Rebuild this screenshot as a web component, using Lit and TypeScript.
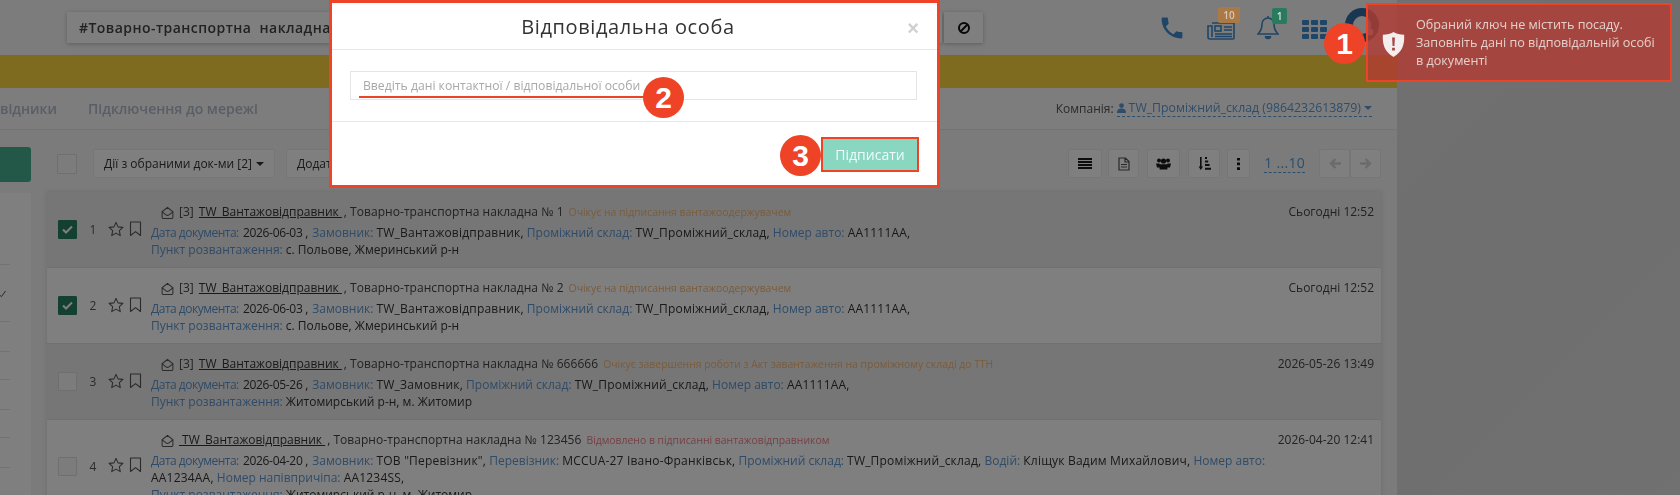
import { LitElement, html, css, svg } from "lit";
import { customElement } from "lit/decorators.js";

type Meta = [string, string];
interface Row {
  n: number; checked: boolean; prefix: string; doc: string; status: string; statusKind: string;
  date: string; meta: Meta[]; point: string; striped: boolean;
}
const rows: Row[] = [
  { n: 1, checked: true, striped: true, prefix: "[3]", doc: "Товарно-транспортна накладна № 1", status: "Очікує на підписання вантажоодержувачем", statusKind: "wait", date: "Сьогодні 12:52",
    meta: [["Дата документа:", "2026-06-03 ,"], ["Замовник:", "TW_Вантажовідправник,"], ["Проміжний склад:", "TW_Проміжний_склад,"], ["Номер авто:", "АА1111АА,"]], point: "с. Польове, Жмеринський р-н" },
  { n: 2, checked: true, striped: false, prefix: "[3]", doc: "Товарно-транспортна накладна № 2", status: "Очікує на підписання вантажоодержувачем", statusKind: "wait", date: "Сьогодні 12:52",
    meta: [["Дата документа:", "2026-06-03 ,"], ["Замовник:", "TW_Вантажовідправник,"], ["Проміжний склад:", "TW_Проміжний_склад,"], ["Номер авто:", "АА1111АА,"]], point: "с. Польове, Жмеринський р-н" },
  { n: 3, checked: false, striped: true, prefix: "[3]", doc: "Товарно-транспортна накладна № 666666", status: "Очікує завершення роботи з Акт завантаження на проміжному складі до ТТН", statusKind: "wait", date: "2026-05-26 13:49",
    meta: [["Дата документа:", "2026-05-26 ,"], ["Замовник:", "TW_Замовник,"], ["Проміжний склад:", "TW_Проміжний_склад,"], ["Номер авто:", "АА1111АА,"]], point: "Житомирський р-н, м. Житомир" },
  { n: 4, checked: false, striped: false, prefix: "", doc: "Товарно-транспортна накладна № 123456", status: "Відмовлено в підписанні вантажовідправником", statusKind: "rej", date: "2026-04-20 12:41",
    meta: [["Дата документа:", "2026-04-20 ,"], ["Замовник:", 'ТОВ "Перевізник",'], ["Перевізник:", "МССUA-27 Івано-Франківськ,"], ["Проміжний склад:", "TW_Проміжний_склад,"], ["Водій:", "Кліщук Вадим Михайлович,"], ["Номер авто:", "АА1234АА,"], ["Номер напівпричіпа:", "АА1234SS,"]], point: "Житомирський р-н, м. Житомир" },
];

const envelope = svg`<path d="M1.2 6.2 7 1.4l5.8 4.8v6.2a1 1 0 0 1-1 1H2.2a1 1 0 0 1-1-1z M1.6 6.6 5.4 9.6a2.6 2.6 0 0 0 3.2 0l3.8-3" fill="none" stroke="currentColor" stroke-width="1.1"/>`;
const star = svg`<path d="M7.5 1.3 9.4 5.5l4.6.5-3.4 3.1.9 4.6-4-2.3-4 2.3.9-4.6L1 6l4.6-.5z" fill="none" stroke="currentColor" stroke-width="1" stroke-linejoin="round"/>`;
const bookmark = svg`<path d="M1 1h10v13.5L6 10.6 1 14.5z" fill="none" stroke="currentColor" stroke-width="1.1" stroke-linejoin="round"/>`;

@customElement("app-root")
export class AppRoot extends LitElement {
  static styles = css`
    :host { display: block; position: relative; width: 1680px; height: 495px; overflow: hidden;
      font-family: "Open Sans", "Noto Sans", sans-serif; font-size: 12px; color: #3c3c3c; }
    svg { display: block; flex: none; }
    .page { display: flex; width: 1680px; height: 495px; overflow: hidden; filter: blur(0.6px); }
    .main { flex: none; width: 1397px; background: #f6f6f6; }
    .texture { flex: 1; background: linear-gradient(135deg, #dfe1df, #dcdedc 50%, #e0e2e0); }

    .top { height: 55px; display: flex; align-items: center; padding-left: 67px; background: #f8f8f8; padding-right: 18px; box-sizing: border-box; }
    .search { width: 875px; height: 31px; box-sizing: border-box; background: #fff; box-shadow: 0 1px 4px rgba(0,0,0,.25);
      display: flex; align-items: center; padding-left: 12px; font-size: 14px; font-weight: 600; letter-spacing: .45px; color: #444; white-space: pre; }
    .clear { margin-left: 2px; width: 39px; height: 31px; background: #fff; box-shadow: 0 1px 4px rgba(0,0,0,.25); display: flex; align-items: center; justify-content: center; color: #111; }
    .icons { margin-left: auto; display: flex; align-items: center; color: #3e8ccc; }
    .ic.news { margin-left: 24px; margin-top: 4px; }
    .ic.bell { margin-left: 22px; }
    .ic.grid { margin-left: 23px; margin-top: 3px; }
    .ic.ava { margin-left: 18px; margin-top: -6px; color: #2f6fa6; }

    .badge { position: absolute; height: 16px; box-sizing: border-box; border-radius: 2px; font-size: 10px; font-weight: 600; line-height: 16px; text-align: center; filter: blur(0.5px); }
    .b10 { left: 1218px; top: 7px; width: 22px; background: #a97a48; color: #d9c6b0; }
    .b1 { left: 1272px; top: 8px; width: 15px; background: #2a7a5e; color: #cfe0d8; }

    .yellow { height: 33px; background: #fdd63e; }

    .nav { height: 42px; box-sizing: border-box; display: flex; align-items: center; border-bottom: 1px solid #e6e6e6; padding-right: 25px; background: #fbfbfb; }
    .tab { font-size: 14px; font-weight: 600; color: #b0bccb; white-space: nowrap; }
    .tab.cut { width: 88px; flex: none; }
    .company { margin-left: auto; display: flex; align-items: center; gap: 3px; color: #555; white-space: nowrap; }
    .company .link { display: inline-flex; align-items: center; gap: 3px; color: #5b9bd5; border-bottom: 1px dashed #5b9bd5; line-height: 16px; font-size: 12.3px; }
    .caret { width: 0; height: 0; border-left: 4px solid transparent; border-right: 4px solid transparent; border-top: 4px solid currentColor; display: inline-block; }

    .content { display: flex; }
    .left { flex: none; width: 31px; padding-top: 17px; }
    .green { height: 35px; background: #47b090; border-radius: 0 3px 3px 0; }
    .panel { margin-top: 11px; height: 320px; background: #fff; display: flex; flex-direction: column; }
    .tick { flex: none; width: 10px; box-sizing: border-box; border-bottom: 1px solid #e4e4e4; }
    .tick.mark-tick { display: flex; align-items: center; color: #555; }
    .right { flex: none; width: 1334px; margin-left: 16px; padding-top: 19px; }

    .tools { display: flex; align-items: center; height: 29px; padding-left: 10px; margin-bottom: 14px; }
    .box { flex: none; width: 20px; height: 20px; box-sizing: border-box; border: 1px solid #dedede; background: #f9f9f9; border-radius: 1px; display: flex; align-items: center; justify-content: center; color: #fff; }
    .box.on { background: #268060; border-color: #268060; }
    .btn { height: 29px; box-sizing: border-box; border: 1px solid #ececec; background: #fff; border-radius: 2px; display: flex; align-items: center; justify-content: center; color: #333; white-space: nowrap; }
    .btn.act { margin-left: 16px; width: 182px; gap: 4px; }
    .btn.add { margin-left: 11px; width: 180px; justify-content: flex-start; padding-left: 10px; gap: 4px; }
    .tright { margin-left: auto; display: flex; align-items: center; }
    .btn.i { color: #1a1a1a; }
    .w34 { width: 34px; }
    .w31 { width: 31px; margin-left: 6px; }
    .w33 { width: 33px; margin-left: 8px; }
    .w32 { width: 32px; margin-left: 8px; }
    .w23 { width: 23px; margin-left: 7px; }
    .pager { color: #5b9bd5; border-bottom: 1px dashed #5b9bd5; font-size: 14px; line-height: 18px; margin: 0 14px; letter-spacing: .3px; }
    .arrows { display: flex; }
    .arrows .btn { width: 31px; color: #d6d6d6; }

    .list { background: #fff; box-shadow: 0 0 5px rgba(0,0,0,.12); }
    .row { display: flex; background: #fff; border-bottom: 1px solid #e2e2e2; }
    .row.st { background: #ececec; }
    .row .lead { flex: none; align-self: center; display: flex; align-items: center; padding-left: 11px; color: #555; }
    .row .box { width: 19px; height: 19px; }
    .num { width: 8px; margin-left: 12px; text-align: center; }
    .star { margin-left: 11px; margin-top: -2px; }
    .mark { margin-left: 5px; margin-top: -2px; }
    .body { flex: none; width: 1120px; margin-left: 9px; padding: 11px 0 9px; line-height: 17px; white-space: normal; color: #333; }
    .title { display: flex; align-items: center; padding-left: 10px; color: #444; margin-bottom: 3px; white-space: pre; line-height: 18px; }
    .title svg { color: #555; margin-right: 5px; }
    .prefix { margin-right: 2px; }
    .sender { text-decoration: underline; color: #333; margin-right: 2px; }
    .doc { letter-spacing: .05px; }
    .stat { font-size: 10.4px; margin-left: 5px; }
    .stat.wait { color: #f5b877; }
    .stat.rej { color: #ef7f8c; }
    .lb { color: #5f96d0; }
    .lb.first { letter-spacing: -.5px; margin-right: 1px; }
    .val { letter-spacing: .2px; }
    .val.first { letter-spacing: -.3px; margin-right: 1px; }
    .date { flex: 1; text-align: right; padding: 11px 7px 0 0; line-height: 18px; color: #444; white-space: nowrap; }

    .veil { position: absolute; inset: 0; background: rgba(0,0,0,.5); }

    .modal { position: absolute; left: 329px; top: 0; width: 611px; height: 188px; box-sizing: border-box; background: #fff; border: 3px solid #ee4326; filter: blur(0.45px); }
    .m-head { height: 47px; box-sizing: border-box; border-bottom: 1px solid #e8e8e8; display: flex; align-items: center; justify-content: center; font-size: 20px; color: #333; position: relative; letter-spacing: .6px; padding-right: 13px; }
    .x { position: absolute; right: 18px; top: 15px; font-size: 20px; line-height: 20px; font-weight: 700; color: #cfcfcf; font-family: "Liberation Sans", sans-serif; letter-spacing: 0; }
    .m-body { padding: 21px 20px 21px 18px; }
    .input { height: 29px; box-sizing: border-box; border: 1px solid #e5e5e5; padding-left: 12px; display: flex; align-items: center; color: #a8a8a8; font-size: 12.2px; }
    .m-foot { border-top: 1px solid #e8e8e8; display: flex; justify-content: flex-end; padding: 15px 18px 0 0; }
    .sign { width: 98px; height: 35px; box-sizing: border-box; border: 2px solid #ee4326; background: #8ad7c1; color: #f2fbf8; font-size: 14px; display: flex; align-items: center; justify-content: center; }

    .toast { position: absolute; left: 1366px; top: 3px; width: 306px; height: 79px; box-sizing: border-box; border: 2px solid #ee4326; background: rgba(177,60,51,.8); display: flex; align-items: center; color: #e6d0cc; line-height: 18px; font-size: 12.6px; filter: blur(0.4px); }
    .toast svg { margin-left: 14px; margin-right: 11px; margin-top: 3px; }

    .line { position: absolute; left: 359px; top: 96px; width: 286px; height: 2px; background: #ee4326; }
    .pin { position: absolute; width: 41px; height: 41px; border-radius: 50%; background: #ee4326; color: #fff; font-family: "Liberation Sans", sans-serif; font-weight: 700; font-size: 30px; display: flex; align-items: center; justify-content: center; }
    .p1 { left: 1324px; top: 23px; }
    .p2 { left: 643px; top: 77px; }
    .p3 { left: 780px; top: 135px; }
  `;

  private row(r: Row) {
    const check = r.checked
      ? html`<svg width="11" height="9" viewBox="0 0 11 9"><path d="M1 4.500 4 7.500 10 1.500" fill="none" stroke="#fff" stroke-width="2"/></svg>`
      : "";
    return html`<div class="row ${r.striped ? "st" : ""}">
      <div class="lead">
        <div class="box ${r.checked ? "on" : ""}">${check}</div>
        <div class="num">${r.n}</div>
        <svg class="star" width="16" height="16" viewBox="0 0 15 15">${star}</svg>
        <svg class="mark" width="13" height="16" viewBox="0 0 12 16">${bookmark}</svg>
      </div>
      <div class="body">
        <div class="title"><svg width="13" height="13" viewBox="0 0 14 14">${envelope}</svg>${r.prefix
          ? html`<span class="prefix">${r.prefix} </span><span class="sender">TW_Вантажовідправник </span>`
          : html`<span class="sender"> TW_Вантажовідправник </span>`}, <span class="doc">${r.doc}</span><span class="stat ${r.statusKind}">${r.status}</span></div>
        <div>${r.meta.map(([k, v], i) => html`<span class="lb ${i === 0 ? "first" : ""}">${k}</span> <span class="val ${i === 0 ? "first" : ""}">${v}</span> `)}</div>
        <div><span class="lb">Пункт розвантаження:</span> ${r.point}</div>
      </div>
      <div class="date">${r.date}</div>
    </div>`;
  }

  render() {
    const ticks = [72, 57, 30, 28, 30, 28, 30];
    return html`
      <div class="page">
        <div class="main">
          <div class="top">
            <div class="search">#Товарно-транспортна  накладна</div>
            <div class="clear"><svg width="14" height="14" viewBox="0 0 14 14"><circle cx="7" cy="7" r="5" fill="none" stroke="currentColor" stroke-width="2"/><path d="M3.500 10.500 10.500 3.500" stroke="currentColor" stroke-width="2"/></svg></div>
            <div class="icons">
              <svg class="ic" width="22" height="22" viewBox="2.500 2.500 19 19"><path fill="currentColor" d="M6.620 10.790c1.440 2.830 3.760 5.140 6.590 6.590l2.200-2.200c.27-.27.67-.36 1.020-.24 1.120.37 2.330.57 3.570.57.55 0 1 .45 1 1V20c0 .55-.45 1-1 1-9.390 0-17-7.610-17-17 0-.55.45-1 1-1h3.500c.55 0 1 .45 1 1 0 1.250.2 2.450.57 3.570.11.35.03.74-.25 1.020l-2.200 2.200z"/></svg>
              <svg class="ic news" width="28" height="20" viewBox="0 0 28 20" fill="none" stroke="currentColor" stroke-width="1.6"><path d="M5 3h22v15a1 1 0 0 1-1 1H3a2 2 0 0 1-2-2V6h4v11"/><rect x="8" y="6" width="6" height="5"/><path d="M17 7h8M17 10h8M8 14h17M8 16.500h17"/></svg>
              <svg class="ic bell" width="22" height="25" viewBox="0 0 22 25" fill="none" stroke="currentColor" stroke-width="1.6"><path d="M11 3a6 6 0 0 1 6 6c0 6 2 8 4 10H1c2-2 4-4 4-10a6 6 0 0 1 6-6z"/><path d="M8.500 21a2.500 2.500 0 0 0 5 0" fill="currentColor"/><path d="M11 1v2"/></svg>
              <svg class="ic grid" width="25" height="19" viewBox="0 0 25 19" fill="currentColor">
                ${[0, 7, 14].map((y) => [0, 9, 18].map((x) => svg`<rect x=${x} y=${y} width="7" height="5" rx="1"/>`))}
              </svg>
              <svg class="ic ava" width="34" height="34" viewBox="0 0 34 34" fill="none"><circle cx="17" cy="17" r="13" stroke="currentColor" stroke-width="8"/><circle cx="25" cy="24" r="3.500" fill="#fff"/></svg>
            </div>
          </div>
          <div class="yellow"></div>
          <div class="nav">
            <div class="tab cut">відники</div>
            <div class="tab">Підключення до мережі</div>
            <div class="company">Компанія:
              <span class="link">
                <svg width="9" height="10" viewBox="0 0 9 10" fill="currentColor"><circle cx="4.500" cy="2.600" r="2.400"/><path d="M0 10c0-4 2-4.600 4.500-4.600S9 6 9 10z"/></svg>
                TW_Проміжний_склад (9864232613879)<span class="caret"></span>
              </span>
            </div>
          </div>
          <div class="content">
            <div class="left">
              <div class="green"></div>
              <div class="panel">${ticks.map((h, i) => html`<div class="tick ${i === 1 ? "mark-tick" : ""}" style="height:${h}px">${i === 1 ? html`<svg width="6" height="7" viewBox="0 0 6 7"><path d="M0 5.500 1.500 6.500 5.500 1" fill="none" stroke="currentColor"/></svg>` : ""}</div>`)}</div>
            </div>
            <div class="right">
              <div class="tools">
                <div class="box"></div>
                <div class="btn act">Дії з обраними док-ми [2] <span class="caret"></span></div>
                <div class="btn add">Додати до групи <span class="caret"></span></div>
                <div class="tright">
                  <div class="btn i w34"><svg width="14" height="11" viewBox="0 0 14 11" fill="currentColor"><path d="M0 0h14v2H0zM0 3h14v2H0zM0 6h14v2H0zM0 9h14v2H0z"/></svg></div>
                  <div class="btn i w31"><svg width="12" height="14" viewBox="0 0 12 14" fill="none" stroke="currentColor" stroke-width="1.200" opacity=".75"><path d="M1 1h6.500L11 4.500V13H1zM7 1v4h4M3 7.500h6M3 10h6"/></svg></div>
                  <div class="btn i w33"><svg width="15" height="12" viewBox="0 0 15 12" fill="currentColor"><circle cx="3" cy="2.600" r="2"/><circle cx="12" cy="2.600" r="2"/><circle cx="7.500" cy="3" r="2.600"/><path d="M0 5.600h3.600v4H1zM15 5.600h-3.600v4H14zM3.600 6.200h7.800V11.600H3.600z"/></svg></div>
                  <div class="btn i w32"><svg width="13" height="13" viewBox="0 0 13 13" fill="currentColor"><path d="M2 0h1.600v9.500H5L2.800 13 .6 9.500H2zM7 0h2v2H7zM7 3.500h3.200v2H7zM7 7h4.600v2H7zM7 10.800h6v2H7z"/></svg></div>
                  <div class="btn i w23"><svg width="3" height="12" viewBox="0 0 3 12" fill="currentColor"><path d="M0 0h3v2.600H0zM0 4.600h3v2.600H0zM0 9.200h3v2.800H0z"/></svg></div>
                  <div class="pager">1 ...10</div>
                  <div class="arrows">
                    <div class="btn"><svg width="12" height="11" viewBox="0 0 12 11" fill="none" stroke="currentColor" stroke-width="2.400"><path d="M12 5.500H2M6.500 1 2 5.500 6.500 10"/></svg></div>
                    <div class="btn"><svg width="12" height="11" viewBox="0 0 12 11" fill="none" stroke="currentColor" stroke-width="2.400"><path d="M0 5.500h10M5.500 1 10 5.500 5.500 10"/></svg></div>
                  </div>
                </div>
              </div>
              <div class="list">${rows.map((r) => this.row(r))}</div>
            </div>
          </div>
        </div>
        <div class="texture"></div>
      </div>
      <div class="veil"></div>
      <div class="badge b10">10</div>
      <div class="badge b1">1</div>
      <div class="modal">
        <div class="m-head">Відповідальна особа<span class="x">×</span></div>
        <div class="m-body"><div class="input">Введіть дані контактної / відповідальної особи</div></div>
        <div class="m-foot"><div class="sign">Підписати</div></div>
      </div>
      <div class="toast">
        <svg width="23" height="25" viewBox="0 0 24 27"><path fill="#f4eeee" d="M12 0c3 2 7 3 11.500 3 .5 9-1 18-11.500 24C1.500 21 0 12 .5 3 5 3 9 2 12 0z"/><path fill="#a5463f" d="M10.500 6h3l-.5 9h-2zM10.500 17h3v3h-3z"/></svg>
        <div>Обраний ключ не містить посаду.<br />Заповніть дані по відповідальній особі<br />в документі</div>
      </div>
      <div class="line"></div>
      <div class="pin p1">1</div>
      <div class="pin p2">2</div>
      <div class="pin p3">3</div>
    `;
  }
}
